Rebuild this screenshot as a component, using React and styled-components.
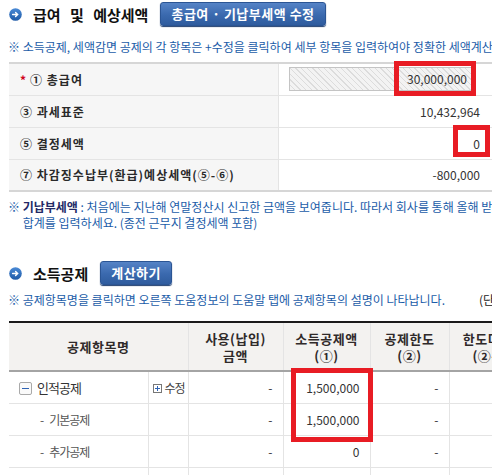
import React from 'react';
import styled, { createGlobalStyle } from 'styled-components';

const colors = {
  text: '#333333',
  note: '#1a5ca8',
  noteStrong: '#232a66',
  red: '#e81c24',
  line: '#e4e4e4',
};

const GlobalStyle = createGlobalStyle`
  html, body {
    margin: 0;
    padding: 0;
    background: #ffffff;
    overflow: hidden;
  }
  body {
    font-family: "Noto Sans CJK KR", "Noto Sans", sans-serif;
    color: ${colors.text};
  }
`;

const Page = styled.div`
  width: 640px;
  padding: 0 0 0 8px;
`;

const SectionHead = styled.div`
  display: flex;
  align-items: center;
  height: 28px;
  margin-top: ${(p) => p.$top || 0}px;
  padding-left: 1px;
`;

const Bullet = styled.svg`
  width: 13px;
  height: 13px;
  flex: none;
  margin-right: 11px;
`;

const Title = styled.h2`
  margin: 0 12px 0 0;
  font-size: 15px;
  font-weight: bold;
  color: #111;
  word-spacing: 6px;
  line-height: 1;
`;

const BlueButton = styled.button`
  height: 24px;
  padding: 0 ${(p) => p.$pad || 10}px;
  border: 1px solid #2b5594;
  border-radius: 3px;
  background: linear-gradient(#5583c6, #3a69ae 55%, #2f5c9e);
  box-shadow: 0 1px 1px #1e3e6e;
  color: #fff;
  font-family: inherit;
  font-size: 13px;
  font-weight: bold;
  letter-spacing: 0.5px;
  line-height: 22px;
  cursor: pointer;
`;

const Note = styled.p`
  margin: ${(p) => p.$top || 0}px 0 0;
  font-size: 12px;
  line-height: 16px;
  letter-spacing: 0;
  color: ${colors.note};
  white-space: nowrap;
  display: flex;
`;

const NoteBody = styled.span`
  display: block;
`;

const NoteLine = styled.span`
  display: block;
`;

const Strong = styled.b`
  color: ${colors.noteStrong};
`;

const Unit = styled.span`
  margin-left: 34px;
  color: #222;
`;

const SummaryTable = styled.table`
  margin: 7px 0 0 1px;
  width: 483px;
  border-collapse: collapse;
  border-top: 2px solid #d6d6d6;
  border-bottom: 2px solid #d6d6d6;
  font-size: 12px;
`;

const SummaryRow = styled.tr`
  height: 32px;
  border-bottom: 1px solid ${colors.line};
  &:last-child {
    border-bottom: none;
  }
`;

const LabelCell = styled.th`
  width: 258px;
  padding: 0 0 0 11px;
  background: #f6f6f6;
  border-right: 1px solid ${colors.line};
  text-align: left;
  font-weight: bold;
  color: #2a2a2a;
  letter-spacing: 1px;
`;

const Star = styled.span`
  color: #d0021b;
  margin-right: 3px;
`;

const ValueCell = styled.td`
  position: relative;
  padding: 0 12px 0 10px;
  text-align: right;
  color: #333;
  letter-spacing: 0;
`;

const HatchedInput = styled.div`
  width: 183px;
  height: 24px;
  box-sizing: border-box;
  border: 1px solid #c4c4c4;
  padding-right: 4px;
  line-height: 22px;
  text-align: right;
  background: repeating-linear-gradient(45deg, #f3f3f3 0 3px, #dcdcdc 3px 4px);
`;

const Highlight = styled.div`
  position: absolute;
  box-sizing: border-box;
  border: 5px solid ${colors.red};
  pointer-events: none;
  top: ${(p) => p.$top}px;
  right: ${(p) => p.$right}px;
  width: ${(p) => p.$w}px;
  height: ${(p) => p.$h}px;
`;

const DeductTable = styled.table`
  margin: 13px 0 0 1px;
  border-collapse: collapse;
  table-layout: fixed;
  width: 620px;
  font-size: 12px;
  letter-spacing: -1px;
  border-top: 2px solid #1a1a1a;
`;

const HeadCell = styled.th`
  height: 45px;
  background: #f3f2f0;
  border-bottom: 2px solid #a4a4a4;
  border-left: 1px solid ${colors.line};
  &:first-child {
    border-left: none;
  }
  font-weight: bold;
  color: #2f2a2a;
  line-height: 17px;
  font-size: 13px;
  letter-spacing: 0.5px;
`;

const BodyRow = styled.tr`
  height: 32px;
  border-bottom: 1px solid ${colors.line};
`;

const NameCell = styled.td`
  padding-left: ${(p) => (p.$sub ? 31 : 10)}px;
  color: ${(p) => (p.$sub ? '#555' : '#333')};
  font-size: ${(p) => (p.$sub ? 12 : 13)}px;
  white-space: nowrap;
`;

const EditCell = styled.td`
  border-left: 1px solid ${colors.line};
  padding-left: 4px;
  color: #444;
  white-space: nowrap;
`;

const NumCell = styled.td`
  position: relative;
  border-left: 1px solid ${colors.line};
  padding-right: 10px;
  text-align: right;
  color: #333;
  letter-spacing: 0;
`;

const Toggle = styled.span`
  display: inline-block;
  width: 13px;
  height: 13px;
  box-sizing: border-box;
  border: 1px solid #a9a9a9;
  border-radius: 2px;
  vertical-align: -2px;
  margin-right: 5px;
  position: relative;
  background: #fafafa;
  &::after {
    content: '';
    position: absolute;
    left: 2px;
    right: 2px;
    top: 5px;
    height: 1px;
    background: #2f63b4;
  }
`;

const PlusBox = styled.span`
  display: inline-block;
  width: 9px;
  height: 9px;
  box-sizing: border-box;
  border: 1px solid #777;
  margin-right: 3px;
  position: relative;
  vertical-align: 0;
  &::before,
  &::after {
    content: '';
    position: absolute;
    background: #2f63b4;
  }
  &::before {
    left: 1px;
    right: 1px;
    top: 3px;
    height: 1px;
  }
  &::after {
    top: 1px;
    bottom: 1px;
    left: 3px;
    width: 1px;
  }
`;

const Dash = styled.span`
  margin-right: 6px;
`;

const BulletIcon = () => (
  <Bullet viewBox="0 0 13 13">
    <defs>
      <linearGradient id="bl" x1="0" y1="0" x2="0" y2="1">
        <stop offset="0" stopColor="#4a8ad6" />
        <stop offset="1" stopColor="#1f5aa6" />
      </linearGradient>
    </defs>
    <circle cx="6.5" cy="6.5" r="6.3" fill="url(#bl)" />
    <path d="M3.6 6.5h5M6.6 4.4l2.1 2.1-2.1 2.1" stroke="#fff" strokeWidth="1.4" fill="none" strokeLinecap="round" />
  </Bullet>
);

const summary = [
  { key: 'gross', label: '① 총급여', star: true, value: '30,000,000', input: true },
  { key: 'base', label: '③ 과세표준', value: '10,432,964' },
  { key: 'tax', label: '⑤ 결정세액', value: '0', mark: true },
  { key: 'due', label: '⑦ 차감징수납부(환급)예상세액(⑤-⑥)', value: '-800,000' },
];

const deductions = [
  { key: 'person', name: '인적공제', group: true, used: '-', amount: '1,500,000', limit: '-' },
  { key: 'basic', name: '기본공제', used: '-', amount: '1,500,000', limit: '-' },
  { key: 'extra', name: '추가공제', used: '-', amount: '0', limit: '-' },
  { key: 'more', name: '', used: '', amount: '', limit: '' },
];

export default function App() {
  return (
    <Page>
      <GlobalStyle />
      <SectionHead>
        <BulletIcon />
        <Title>급여 및 예상세액</Title>
        <BlueButton>총급여 · 기납부세액 수정</BlueButton>
      </SectionHead>
      <Note $top={11}>
        ※ 소득공제, 세액감면 공제의 각 항목은 +수정을 클릭하여 세부 항목을 입력하여야 정확한 세액계산이 됩니다.
      </Note>

      <SummaryTable>
        <tbody>
          {summary.map((row) => (
            <SummaryRow key={row.key}>
              <LabelCell>
                {row.star && <Star>*</Star>}
                {row.label}
              </LabelCell>
              <ValueCell>
                {row.input ? <HatchedInput>{row.value}</HatchedInput> : row.value}
                {row.input && <Highlight $top={-3} $right={16} $w={82} $h={35} />}
                {row.mark && <Highlight $top={-3} $right={2} $w={37} $h={32} />}
              </ValueCell>
            </SummaryRow>
          ))}
        </tbody>
      </SummaryTable>

      <Note $top={7}>
        <span>※&nbsp;</span>
        <NoteBody>
          <NoteLine>
            <Strong>기납부세액</Strong> : 처음에는 지난해 연말정산시 신고한 금액을 보여줍니다. 따라서 회사를 통해 올해 받은
          </NoteLine>
          <NoteLine>합계를 입력하세요. (종전 근무지 결정세액 포함)</NoteLine>
        </NoteBody>
      </Note>

      <SectionHead $top={28}>
        <BulletIcon />
        <Title>소득공제</Title>
        <BlueButton $pad={10}>계산하기</BlueButton>
      </SectionHead>
      <Note $top={5}>
        ※ 공제항목명을 클릭하면 오른쪽 도움정보의 도움말 탭에 공제항목의 설명이 나타납니다.
        <Unit>(단위: 원)</Unit>
      </Note>

      <DeductTable>
        <colgroup>
          <col style={{ width: 139 }} />
          <col style={{ width: 40 }} />
          <col style={{ width: 95 }} />
          <col style={{ width: 87 }} />
          <col style={{ width: 79 }} />
          <col style={{ width: 90 }} />
          <col style={{ width: 90 }} />
        </colgroup>
        <thead>
          <tr>
            <HeadCell colSpan={2}>공제항목명</HeadCell>
            <HeadCell>
              사용(납입)
              <br />
              금액
            </HeadCell>
            <HeadCell>
              소득공제액
              <br />
              (①)
            </HeadCell>
            <HeadCell>
              공제한도
              <br />
              (②)
            </HeadCell>
            <HeadCell>
              한도미달액
              <br />
              (②-①)
            </HeadCell>
            <HeadCell>비고</HeadCell>
          </tr>
        </thead>
        <tbody>
          {deductions.map((row, i) => (
            <BodyRow key={row.key}>
              <NameCell $sub={!row.group && row.name}>
                {row.group && <Toggle />}
                {!row.group && row.name && <Dash>-</Dash>}
                {row.name}
              </NameCell>
              <EditCell>
                {row.group && (
                  <>
                    <PlusBox />
                    수정
                  </>
                )}
              </EditCell>
              <NumCell>{row.used}</NumCell>
              <NumCell>
                {row.amount}
                {i === 0 && (
                  <Highlight style={{ left: 7, right: 'auto' }} $top={-4} $w={82} $h={74} />
                )}
              </NumCell>
              <NumCell>{row.limit}</NumCell>
              <NumCell />
              <NumCell />
            </BodyRow>
          ))}
        </tbody>
      </DeductTable>
    </Page>
  );
}
